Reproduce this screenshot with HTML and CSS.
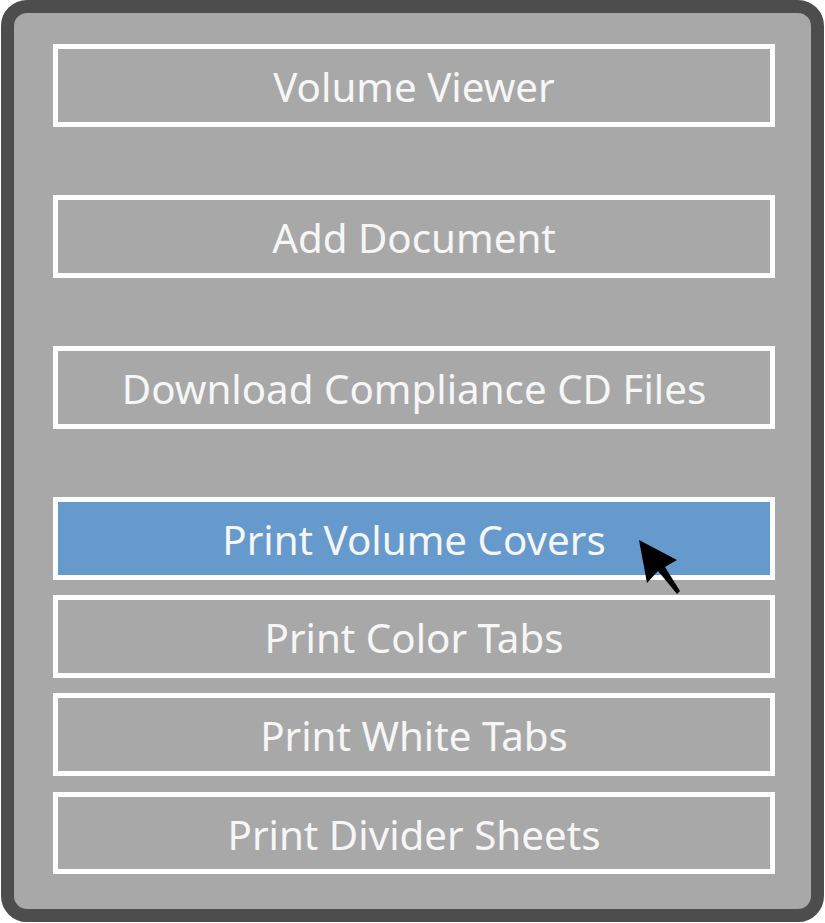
FILE: index.html
```html
<!DOCTYPE html>
<html lang="en">
<head>
<meta charset="utf-8">
<title>Menu</title>
<link rel="stylesheet" href="styles.css">
</head>
<body>
<main class="panel">
  <div class="btn">Volume Viewer</div>
  <div class="btn">Add Document</div>
  <div class="btn">Download Compliance CD Files</div>
  <div class="group">
    <div class="btn active">Print Volume Covers
      <svg class="cursor" width="44" height="58" viewBox="0 0 44 58"><path d="M0 0 L38 20 L26 27 L41 51 L38 54 L19 31 L8 43 Z" fill="#000"/></svg>
    </div>
    <div class="btn">Print Color Tabs</div>
    <div class="btn">Print White Tabs</div>
    <div class="btn">Print Divider Sheets</div>
  </div>
</main>
</body>
</html>
```
FILE: styles.css
```css
html, body { margin: 0; padding: 0; background: #fff; }
.panel {
  box-sizing: border-box;
  width: 823px;
  height: 922px;
  margin-left: 1px;
  padding: 31px 36px 0 39px;
  background: #a8a8a8;
  border: 13px solid #4d4d4d;
  border-radius: 26px;
  display: flex;
  flex-direction: column;
  gap: 68.5px;
}
.group { display: flex; flex-direction: column; gap: 15.7px; }
.btn {
  position: relative;
  box-sizing: border-box;
  height: 82.5px;
  border: 5px solid #fff;
  color: #f6f6f6;
  font: 400 40.3px/76px "Noto Sans", Tahoma, sans-serif;
  text-align: center;
}
.active { background: #6699cc; }
.cursor { position: absolute; left: 581px; top: 38px; }
```
